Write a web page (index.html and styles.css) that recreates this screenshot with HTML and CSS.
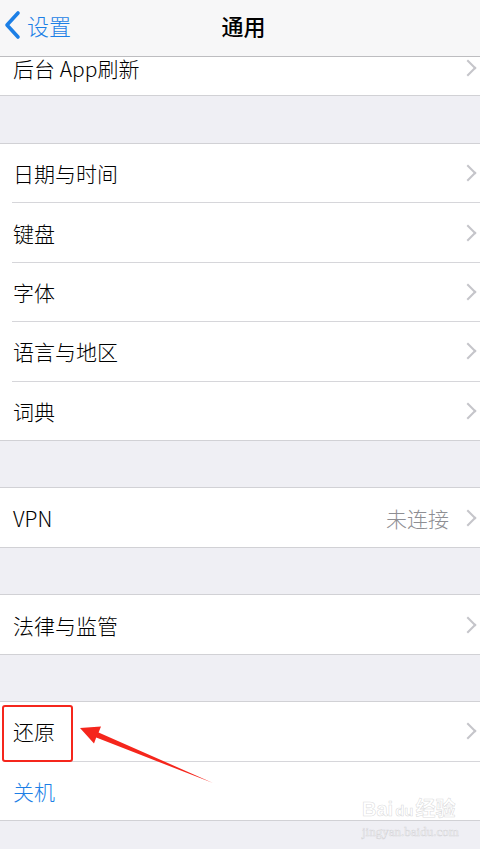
FILE: index.html
```html
<!DOCTYPE html>
<html lang="zh-CN">
    <head>
        <meta charset="utf-8">
        <title>通用</title>
        <link rel="stylesheet" href="styles.css">
    </head>
    <body>
        <!-- Navigation bar -->
        <header class="nav">
            <a class="nav-back">
                <svg class="back-icon" width="18" height="30" viewBox="0 0 18 30">
                    <path d="M15 3 L4 15 L15 27" fill="none" stroke="#1c7fe6" stroke-width="3.6" stroke-linecap="round" stroke-linejoin="round"/>
                </svg>
                <span>设置</span>
            </a>
            <h1 class="nav-title">通用</h1>
            <span class="nav-spacer"></span>
        </header>

        <main class="list">
            <!-- scrolled group, top is hidden under the nav bar -->
            <section class="group clipped">
                <div class="cell">
                    <div class="cell-body">
                        <span class="cell-label">后台 App刷新</span>
                        <span class="chevron"></span>
                    </div>
                </div>
            </section>

            <section class="group">
                <div class="cell"><div class="cell-body"><span class="cell-label">日期与时间</span><span class="chevron"></span></div></div>
                <div class="cell"><div class="cell-body"><span class="cell-label">键盘</span><span class="chevron"></span></div></div>
                <div class="cell"><div class="cell-body"><span class="cell-label">字体</span><span class="chevron"></span></div></div>
                <div class="cell"><div class="cell-body"><span class="cell-label">语言与地区</span><span class="chevron"></span></div></div>
                <div class="cell"><div class="cell-body"><span class="cell-label">词典</span><span class="chevron"></span></div></div>
            </section>

            <section class="group">
                <div class="cell">
                    <div class="cell-body">
                        <span class="cell-label">VPN</span>
                        <span class="cell-value">未连接</span>
                        <span class="chevron"></span>
                    </div>
                </div>
            </section>

            <section class="group">
                <div class="cell"><div class="cell-body"><span class="cell-label">法律与监管</span><span class="chevron"></span></div></div>
            </section>

            <section class="group">
                <div class="cell"><div class="cell-body"><span class="cell-label">还原</span><span class="chevron"></span></div></div>
                <div class="cell"><div class="cell-body"><span class="cell-label action">关机</span></div></div>
            </section>
        </main>

        <!-- Annotation overlay -->
        <div class="mark-box"></div>
        <svg class="mark-arrow" width="480" height="849" viewBox="0 0 480 849">
            <polygon points="80,728 101,726.5 98.6,732.4 213,783 96.2,737.6 94,743.4" fill="#f5261c"/>
        </svg>

        <!-- Watermark -->
        <div class="watermark">
            <div class="wm-logo">Bai<span class="wm-paw">du</span>经验</div>
            <div class="wm-url">jingyan.baidu.com</div>
        </div>
    </body>
</html>
```

FILE: styles.css
```css
/* General Body Styling */
body {
    margin: 0;
    padding: 0;
    background-color: #efeff4;
    font-family: "Noto Sans CJK SC", "Liberation Sans", sans-serif;
    font-weight: 300;
    color: #000;
    width: 480px;
    height: 849px;
    overflow: hidden;
    position: relative;
}

/* Navigation Bar */
.nav {
    height: 57px;
    background-color: #f7f7f8;
    border-bottom: 1px solid #bdbdc0;
    display: flex;
    align-items: center;
    justify-content: space-between;
    box-sizing: border-box;
    padding-bottom: 6px;
}

.nav-back {
    width: 90px;
    display: flex;
    align-items: center;
    color: #1c7fe6;
    font-size: 22px;
    line-height: 30px;
    padding-left: 3px;
    gap: 6px;
}

.back-icon {
    display: block;
}

.nav-title {
    margin: 0;
    font-size: 22px;
    line-height: 30px;
    font-weight: 500;
    padding-left: 4px;
}

.nav-spacer {
    width: 90px;
}

/* List Groups */
.group {
    background-color: #fff;
    border-top: 1px solid #d1d1d5;
    border-bottom: 1px solid #d1d1d5;
    margin-top: 46.5px;
}

.group.clipped {
    border-top: none;
    margin-top: 0;
}

.group.clipped .cell-body {
    height: 38px;
    align-items: flex-start;
}

.group.clipped .cell-label {
    line-height: 22px;
}

.group.clipped .chevron {
    margin-top: 5px;
}

.clipped + .group {
    margin-top: 47px;
}

.cell {
    padding-left: 12px;
    display: flex;
}

.cell-body {
    flex: 1;
    height: 58.4px;
    display: flex;
    align-items: center;
    padding-right: 6px;
    border-bottom: 1px solid #d6d6da;
}

.cell:last-child .cell-body {
    border-bottom: none;
}

.cell-label {
    flex: 1;
    font-size: 21px;
    padding-left: 1px;
}

.cell-label.action {
    color: #1c7fe6;
}

.cell-value {
    font-size: 21px;
    color: #8e8e93;
    margin-right: 13px;
}

.chevron {
    width: 10px;
    height: 10px;
    border-top: 2px solid #c5c5ca;
    border-right: 2px solid #c5c5ca;
    transform: rotate(45deg);
}

/* Annotation */
.mark-box {
    position: absolute;
    left: 2px;
    top: 705px;
    width: 67px;
    height: 53px;
    border: 2.5px solid #f5261c;
    border-radius: 3px;
}

.mark-arrow {
    position: absolute;
    left: 0;
    top: 0;
}

/* Watermark */
.watermark {
    position: absolute;
    left: 362px;
    top: 796px;
    color: rgba(255, 255, 255, 0.85);
    -webkit-text-stroke: 0.6px rgba(175, 175, 180, 0.45);
    font-family: "Liberation Sans", "Noto Sans CJK SC", sans-serif;
}

.wm-logo {
    font-size: 20px;
    font-weight: bold;
    line-height: 26px;
}

.wm-paw {
    font-size: 15px;
    padding: 0 2px;
}

.wm-url {
    font-family: "Liberation Serif", serif;
    font-size: 13px;
    line-height: 16px;
}
```
